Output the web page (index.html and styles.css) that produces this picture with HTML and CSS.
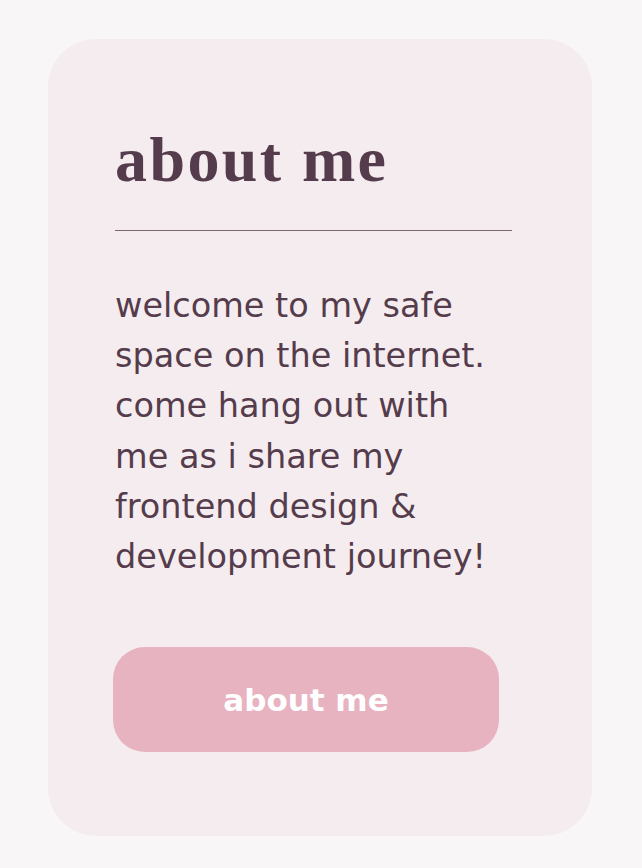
FILE: index.html
```html
<!DOCTYPE html>
<html>
<head>
<meta charset="utf-8">
<link rel="stylesheet" href="styles.css">
</head>
<body>
<main class="page">
  <section class="card">
    <h1 class="title">about me</h1>
    <hr class="divider">
    <p class="intro">welcome to my safe<br>space on the internet.<br>come hang out with<br>me as i share my<br>frontend design &amp;<br>development journey!</p>
    <a class="btn" href="#">about me</a>
  </section>
</main>
</body>
</html>
```
FILE: styles.css
```css
html, body {
  margin: 0;
  padding: 0;
  background: #f8f6f7;
}
.page {
  padding: 39px 50px 32px 48px;
}
.card {
  box-sizing: border-box;
  width: 544px;
  height: 797px;
  background: #f5ecef;
  border-radius: 48px;
  padding: 81px 79px 0 67px;
  display: flex;
  flex-direction: column;
  color: #553c4c;
}
.title {
  margin: 0;
  font-family: "Liberation Serif", serif;
  font-weight: 700;
  font-size: 64px;
  line-height: 80px;
  letter-spacing: 2.4px;
}
.divider {
  margin: 30px 0 0;
  border: 0;
  border-top: 1px solid #7b6672;
  height: 0;
  width: 397px;
}
.intro {
  margin: 50px 0 0;
  font-family: "DejaVu Sans", sans-serif;
  font-size: 33.5px;
  line-height: 50.2px;
}
.btn {
  margin: 65px 0 0 -2px;
  width: 386px;
  height: 105px;
  border-radius: 32px;
  background: #e8b3c0;
  color: #ffffff;
  text-decoration: none;
  display: flex;
  align-items: center;
  justify-content: center;
  font-family: "DejaVu Sans", sans-serif;
  font-weight: 700;
  font-size: 31px;
}
```
